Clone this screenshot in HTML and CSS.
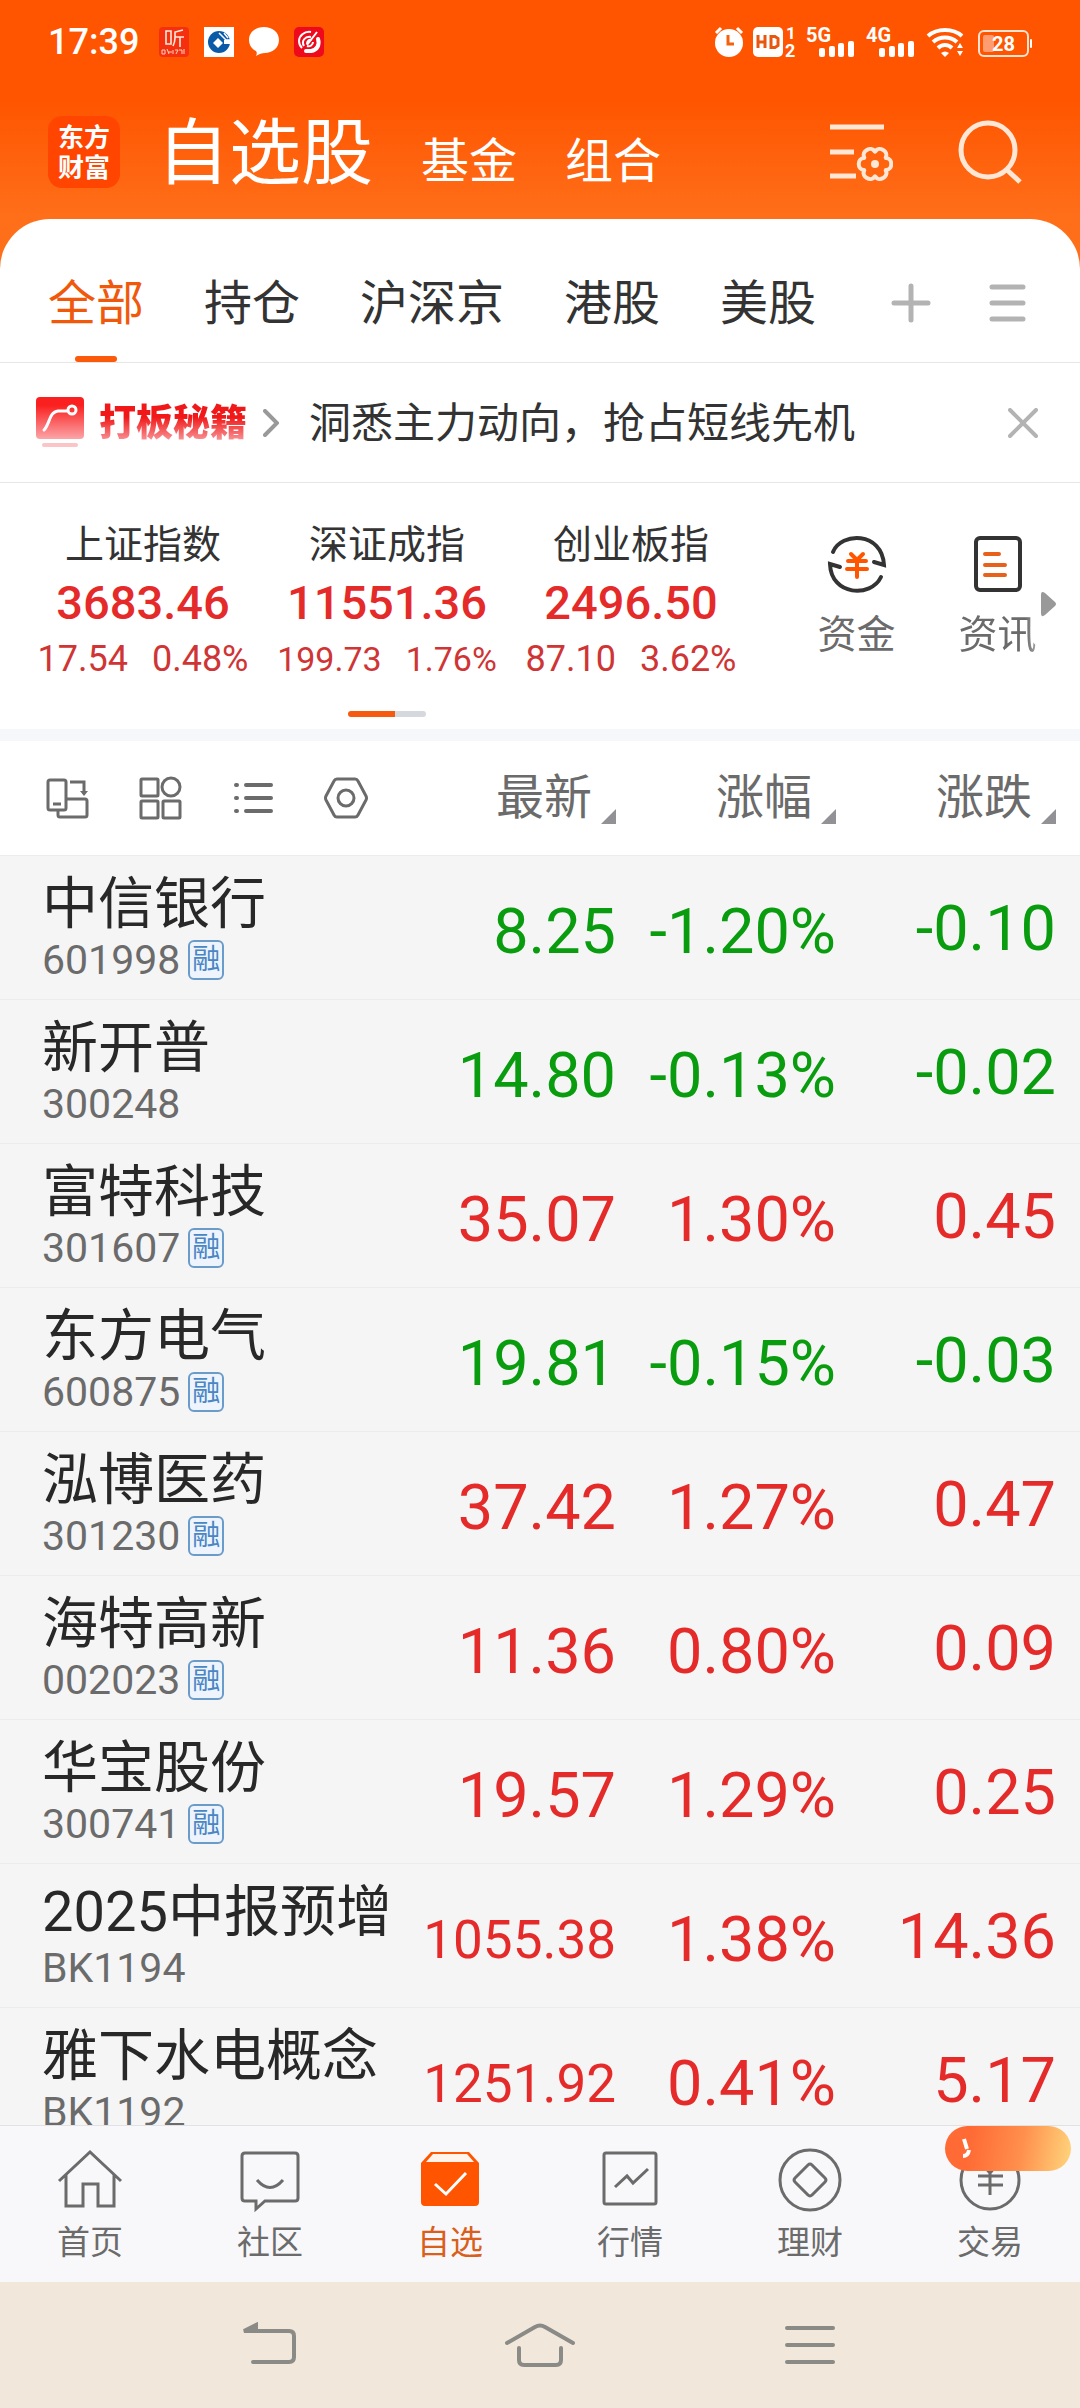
FILE: index.html
```
<!DOCTYPE html>
<html lang="zh-CN">
<head>
  <meta charset="UTF-8">
  <meta name="viewport" content="width=device-width, initial-scale=1.0">
  <title>自选股</title>
  <link rel="stylesheet" href="styles.css">
</head>
<body>
<div class="app">
  <div class="status-bar">
    <span class="clock">17:39</span>
    <svg class="notice" viewBox="0 0 30 30" width="30" height="30">
      <rect width="30" height="30" rx="4" fill="#f5300f"/>
      <path d="M7 4h5v13H7zM24 3l-8 2v6c0 4-1 6-2 8M16 10h9M21 10v10" fill="none" stroke="#ffe9df" stroke-width="1.6"/>
      <path d="M3 23h3v4H3zM8 22l2 5M9 25h4M14 23v4M16 23h3l-2 4M20 23h3v4M25 22v5" fill="none" stroke="#ffd2c2"/>
    </svg>
    <svg class="notice" viewBox="0 0 30 30" width="30" height="30">
      <rect width="30" height="30" fill="#fff"/>
      <circle cx="15" cy="15" r="11" fill="#0a5aa8"/>
      <path d="M14 11l5 5-5 5-5-5z" fill="#fff"/>
      <path d="M20 13h7v4h-7z" fill="#fff"/>
      <path d="M15 6l7 7h4M20 6l4 5" fill="none" stroke="#fff" stroke-width="1.5"/>
    </svg>
    <svg class="notice" viewBox="0 0 30 30" width="30" height="30">
      <path d="M15 0c8 0 15 5 15 13S23 26 16 26c-3 0-6 1-9 3 1-2 1-4 0-5-4-2-7-6-7-11C0 5 7 0 15 0z" fill="#fff"/>
    </svg>
    <svg class="notice" viewBox="0 0 30 30" width="30" height="30">
      <rect width="30" height="30" rx="5" fill="#ee0a1c"/>
      <path d="M17 5C10 4 5 9 5 14c0 3 1 5 3 7" fill="none" stroke="#fff" stroke-width="2"/>
      <path d="M24 12c2 6-1 11-7 12h-5" fill="none" stroke="#fff" stroke-width="4" stroke-linecap="round"/>
      <path d="M10 19c-3-5 1-10 7-9M13 17c0-3 2-5 5-4M23 5L13 18M19 15c0 3-3 5-6 4" fill="none" stroke="#fff" stroke-width="2"/>
    </svg>
    <svg class="signals" viewBox="0 -8 320 48" width="320" height="48" fill="#fff">
      <circle cx="15" cy="17" r="14"/>
      <path d="M2 7l5-5M28 7l-5-5" stroke="#fff" stroke-width="3"/>
      <path d="M14 9v9h6" fill="none" stroke="#f5600f" stroke-width="3"/>
      <rect x="39" y="1" width="30" height="30" rx="5"/>
      <path d="M44 9v13M51 9v13M44 16h7M57 10.500h4l3 2v7l-3 2h-4z" fill="none" stroke="#e8560f" stroke-width="3"/>
      <g class="signal-text">
        <text x="72" y="13" font-size="17">1</text>
        <text x="71" y="31" font-size="18">2</text>
        <text x="92" y="16" font-size="20">5G</text>
        <text x="152" y="16" font-size="20">4G</text>
      </g>
      <rect x="105" y="22" width="6" height="9" rx="2"/><rect x="115" y="20" width="6" height="11" rx="2"/><rect x="124" y="17" width="6" height="14" rx="2"/><rect x="134" y="15" width="6" height="16" rx="2"/>
      <rect x="165" y="22" width="6" height="9" rx="2"/><rect x="175" y="20" width="6" height="11" rx="2"/><rect x="184" y="17" width="6" height="14" rx="2"/><rect x="194" y="15" width="6" height="16" rx="2"/>
      <path d="M214 10c9-8 25-8 34 0M219 16c7-6 17-6 24 0M224 22c4-4 10-4 14 0" fill="none" stroke="#fff" stroke-width="4"/>
      <path d="M227 27q4-3 8 0l-4 4zM243 22l3-5 3 5zM243 25h6l-3 5z"/>
      <rect x="265" y="5" width="49" height="25" rx="5" fill="none" stroke="#ffe3d2" stroke-width="2"/>
      <rect x="269" y="9" width="11" height="17" rx="2" fill="#ff9d70"/>
      <rect x="316" y="13" width="2" height="9" rx="1"/>
      <text class="signal-text" x="278" y="25" font-size="20">28</text>
    </svg>
  </div>

  <header class="app-bar">
    <div class="logo">东方<br>财富</div>
    <nav class="sections">
      <h1>自选股</h1>
      <a href="#">基金</a>
      <a href="#">组合</a>
    </nav>
    <button class="bar-button" aria-label="设置">
      <svg viewBox="0 0 64 64" width="64" height="64" fill="none" stroke="#ffe6d5" stroke-width="5">
        <path d="M1 7h54M1 32h24M1 56h26"/>
        <g transform="translate(46 44)" stroke-width="4" stroke-linecap="round">
          <path id="lobe" d="M11 6C18 6 18-6 11-6"/>
          <use href="#lobe" transform="rotate(60)"/>
          <use href="#lobe" transform="rotate(120)"/>
          <use href="#lobe" transform="rotate(180)"/>
          <use href="#lobe" transform="rotate(240)"/>
          <use href="#lobe" transform="rotate(300)"/>
          <circle r="4" fill="#ffe6d5" stroke="none"/>
        </g>
      </svg>
    </button>
    <button class="bar-button" aria-label="搜索">
      <svg viewBox="0 0 64 64" width="64" height="64" fill="none" stroke="#ffe6d5" stroke-width="5">
        <circle cx="30" cy="30" r="27"/>
        <path d="M48 49l14 13"/>
      </svg>
    </button>
  </header>

  <main class="sheet">
    <nav class="tabs">
      <a class="tab active" href="#">全部</a>
      <a class="tab" href="#">持仓</a>
      <a class="tab" href="#">沪深京</a>
      <a class="tab" href="#">港股</a>
      <a class="tab" href="#">美股</a>
      <div class="tab-tools">
        <button aria-label="添加分组">
          <svg viewBox="0 0 40 40" width="40" height="40" stroke="#b3b3b3" stroke-width="5" stroke-linecap="round"><path d="M3 20h34M20 3v34"/></svg>
        </button>
        <button aria-label="管理分组">
          <svg viewBox="0 0 40 40" width="40" height="40" stroke="#b3b3b3" stroke-width="5" stroke-linecap="round"><path d="M5 4h31M5 20h31M5 36h31"/></svg>
        </button>
      </div>
    </nav>

    <div class="promo">
      <svg viewBox="0 0 48 52" width="48" height="52">
        <defs>
          <linearGradient id="promoFill" x1="0" y1="0" x2="0" y2="1">
            <stop offset=".2" stop-color="#fb2020"/>
            <stop offset="1" stop-color="#fba5a8"/>
          </linearGradient>
        </defs>
        <rect width="48" height="42" rx="4" fill="url(#promoFill)"/>
        <rect x="6" y="46" width="36" height="4" rx="2" fill="#fbc4c6"/>
        <path d="M8 33c6-6 5-18 14-19h9" fill="none" stroke="#fff" stroke-width="3" stroke-linecap="round"/>
        <circle cx="36" cy="13" r="4" fill="none" stroke="#fff" stroke-width="3"/>
      </svg>
      <strong>打板秘籍</strong>
      <svg class="promo-arrow" viewBox="0 0 16 28" width="16" height="28" fill="none" stroke="#999" stroke-width="4" stroke-linecap="round"><path d="M2 2l12 12L2 26"/></svg>
      <a href="#">洞悉主力动向，抢占短线先机</a>
      <button aria-label="关闭">
        <svg viewBox="0 0 30 30" width="30" height="30" stroke="#b3b3b3" stroke-width="4" stroke-linecap="round"><path d="M2 2l26 26M28 2L2 28"/></svg>
      </button>
    </div>

    <section class="overview">
      <div class="indices">
        <div class="index">
          <h2>上证指数</h2>
          <strong>3683.46</strong>
          <p><span>17.54</span><span>0.48%</span></p>
        </div>
        <div class="index">
          <h2>深证成指</h2>
          <strong>11551.36</strong>
          <p class="compact"><span>199.73</span><span>1.76%</span></p>
        </div>
        <div class="index">
          <h2>创业板指</h2>
          <strong>2496.50</strong>
          <p><span>87.10</span><span>3.62%</span></p>
        </div>
        <div class="pager"></div>
      </div>
      <div class="shortcuts">
        <a href="#">
          <svg viewBox="0 0 60 60" width="60" height="60" fill="none" stroke="#333" stroke-width="4" stroke-linecap="round">
            <path d="M6 18C14-2 55-3 57 31l-10-3"/>
            <path d="M54 43C44 64 4 62 3 30l10 3"/>
            <path d="M24 20l6 6 6-6M21 27h18M20 35h20M30 26v17" stroke="#ff5500"/>
          </svg>
          资金
        </a>
        <a class="faded" href="#">
          <svg viewBox="0 0 60 60" width="60" height="60" fill="none" stroke="#333" stroke-width="4" stroke-linecap="round">
            <rect x="8" y="4" width="44" height="52" rx="4"/>
            <path d="M17 20h14M17 31h20M17 41h20" stroke="#e8611a"/>
          </svg>
          资讯
        </a>
        <svg class="more" viewBox="0 0 15 26" width="15" height="26"><path d="M0 4q0-5 4-2l10 9q2 2 0 4L4 24q-4 3-4-2z" fill="#999"/></svg>
      </div>
    </section>

    <div class="quotes">
      <table>
        <thead>
          <tr>
            <th class="tools">
              <div>
                <button aria-label="横屏">
                  <svg viewBox="0 0 44 44" width="44" height="44" fill="none" stroke="#6b6b6b" stroke-width="3">
                    <rect x="3" y="4" width="18" height="30" rx="2"/>
                    <path d="M8 28h8M25 6h14v10M13 34v5q0 2 2 2h25q2 0 2-2V25q0-2-2-2H21"/>
                    <path d="M35 15h8l-4 5z" fill="#6b6b6b" stroke="none"/>
                  </svg>
                </button>
                <button aria-label="宫格">
                  <svg viewBox="0 0 44 44" width="44" height="44" fill="none" stroke="#6b6b6b" stroke-width="3">
                    <rect x="3" y="3" width="17" height="17" rx="1"/><circle cx="33" cy="11" r="9"/>
                    <rect x="3" y="25" width="17" height="17" rx="1"/><rect x="25" y="25" width="17" height="17" rx="1"/>
                  </svg>
                </button>
                <button aria-label="列表">
                  <svg viewBox="0 0 44 44" width="44" height="44" stroke="#6b6b6b" stroke-width="4" stroke-linecap="round">
                    <path d="M5 9h1M15 9h25M5 22h1M15 22h25M5 35h1M15 35h25"/>
                  </svg>
                </button>
                <button aria-label="设置">
                  <svg viewBox="0 0 44 44" width="44" height="44" fill="none" stroke="#6b6b6b" stroke-width="3" stroke-linejoin="round">
                    <path d="M13 3h18q2 0 3 2l8 15q1 2 0 4l-8 15q-1 2-3 2H13q-2 0-3-2L2 24q-1-2 0-4l8-15q1-2 3-2z"/>
                    <circle cx="22" cy="22" r="8"/>
                  </svg>
                </button>
              </div>
            </th>
            <th><button class="sort">最新</button></th>
            <th><button class="sort">涨幅</button></th>
            <th><button class="sort">涨跌</button></th>
          </tr>
        </thead>
        <tbody>
          <tr class="down">
            <td><div class="name">中信银行</div><div class="code">601998<i>融</i></div></td>
            <td>8.25</td><td>-1.20%</td><td>-0.10</td>
          </tr>
          <tr class="down">
            <td><div class="name">新开普</div><div class="code">300248</div></td>
            <td>14.80</td><td>-0.13%</td><td>-0.02</td>
          </tr>
          <tr class="up">
            <td><div class="name">富特科技</div><div class="code">301607<i>融</i></div></td>
            <td>35.07</td><td>1.30%</td><td>0.45</td>
          </tr>
          <tr class="down">
            <td><div class="name">东方电气</div><div class="code">600875<i>融</i></div></td>
            <td>19.81</td><td>-0.15%</td><td>-0.03</td>
          </tr>
          <tr class="up">
            <td><div class="name">泓博医药</div><div class="code">301230<i>融</i></div></td>
            <td>37.42</td><td>1.27%</td><td>0.47</td>
          </tr>
          <tr class="up">
            <td><div class="name">海特高新</div><div class="code">002023<i>融</i></div></td>
            <td>11.36</td><td>0.80%</td><td>0.09</td>
          </tr>
          <tr class="up">
            <td><div class="name">华宝股份</div><div class="code">300741<i>融</i></div></td>
            <td>19.57</td><td>1.29%</td><td>0.25</td>
          </tr>
          <tr class="up">
            <td><div class="name">2025中报预增</div><div class="code">BK1194</div></td>
            <td class="long">1055.38</td><td>1.38%</td><td>14.36</td>
          </tr>
          <tr class="up">
            <td><div class="name">雅下水电概念</div><div class="code">BK1192</div></td>
            <td class="long">1251.92</td><td>0.41%</td><td>5.17</td>
          </tr>
        </tbody>
      </table>
    </div>
  </main>

  <nav class="bottom-nav">
    <a href="#">
      <svg viewBox="0 0 66 66" width="66" height="66"><path d="M2 33L33 4l31 29M9 27v31h17V36h15v22h16V27"/></svg>
      首页
    </a>
    <a href="#">
      <svg viewBox="0 0 66 66" width="66" height="66"><path d="M8 5h50q3 0 3 3v42q0 3-3 3H28l-9 8v-8H8q-3 0-3-3V8q0-3 3-3zM20 32q13 15 26 0"/></svg>
      社区
    </a>
    <a class="active" href="#">
      <svg viewBox="0 0 66 66" width="66" height="66">
        <path d="M4 15L14 4h38l10 11v39q0 4-4 4H8q-4 0-4-4z" fill="#ff5500" stroke="none"/>
        <path d="M9 14l7-8h34l7 8z" fill="#fff4ec" stroke="none"/>
        <path d="M18 36l11 10 20-21" stroke="#fff"/>
      </svg>
      自选
    </a>
    <a href="#">
      <svg viewBox="0 0 66 66" width="66" height="66"><rect x="7" y="5" width="52" height="51" rx="2"/><path d="M18 39l12-11 6 7 15-14"/></svg>
      行情
    </a>
    <a href="#">
      <svg viewBox="0 0 66 66" width="66" height="66"><circle cx="33" cy="32" r="30"/><path d="M35 17l13 13q2 2 0 4L35 47q-2 2-4 0L18 34q-2-2 0-4l13-13q2-2 4 0z"/></svg>
      理财
    </a>
    <a href="#">
      <svg viewBox="0 0 66 66" width="66" height="66"><circle cx="33" cy="32" r="29"/><path d="M25 16l8 9 8-9M21 28h25M21 37h25M33 25v22"/></svg>
      交易
      <span class="bubble"><svg viewBox="0 0 10 22" width="10" height="22"><path d="M3 2l3 10M8 13q-1 6-6 6" fill="none" stroke="#fff" stroke-width="4"/></svg></span>
    </a>
  </nav>

  <div class="system-nav">
    <button aria-label="返回">
      <svg viewBox="0 0 72 46" width="72" height="46"><path d="M12 9h43q5 0 5 5v21q0 5-5 5H19"/><path d="M10 9L22 3v6z" fill="#8a8a86"/></svg>
    </button>
    <button aria-label="主屏幕">
      <svg viewBox="0 0 72 46" width="72" height="46"><path d="M3 21L31 5q5-3 10 0l28 16M15 26v12q0 5 5 5h32q5 0 5-5V26"/></svg>
    </button>
    <button aria-label="最近任务">
      <svg viewBox="0 0 72 46" width="72" height="46"><path d="M13 6h46M13 23h46M13 40h46"/></svg>
    </button>
  </div>
</div>
</body>
</html>
```
FILE: styles.css
```
* {
  box-sizing: border-box;
}

body {
  margin: 0;
  font-family: Roboto, "Noto Sans CJK SC", sans-serif;
  color: #333;
}

a {
  color: inherit;
  text-decoration: none;
}

button {
  padding: 0;
  border: none;
  background: none;
  font: inherit;
  color: inherit;
  cursor: pointer;
}

svg {
  display: block;
  flex: none;
}

h1, h2, p {
  margin: 0;
  font-weight: normal;
}

.app {
  height: 100vh;
  display: flex;
  flex-direction: column;
  overflow: hidden;
  background: linear-gradient(#ff5500 100px, #ff6f1a 219px);
}

/* status bar */
.status-bar {
  height: 84px;
  padding: 0 46px 0 48px;
  display: flex;
  align-items: center;
  color: #fff;
}

.clock {
  margin-right: 5px;
  font-size: 36px;
  font-weight: 500;
}

.notice {
  margin-left: 15px;
}

.signals {
  margin-left: auto;
}

.signal-text {
  font-weight: 700;
}

/* app bar */
.app-bar {
  height: 135px;
  padding: 0 58px 0 48px;
  display: flex;
  align-items: center;
  color: #fff;
}

.logo {
  width: 72px;
  height: 72px;
  padding-top: 5px;
  border-radius: 14px;
  background: #ff4500;
  font-family: "Noto Sans CJK SC", sans-serif;
  font-size: 26px;
  font-weight: 700;
  line-height: 30px;
  text-align: center;
}

.sections {
  flex: 1;
  margin-left: 37px;
  padding-top: 12px;
  display: flex;
  align-items: baseline;
  gap: 48px;
  font-size: 48px;
  line-height: 72px;
}

.sections h1 {
  font-size: 72px;
}

.bar-button {
  margin-left: 65px;
}

/* white sheet */
.sheet {
  flex: 1;
  min-height: 0;
  display: flex;
  flex-direction: column;
  border-radius: 50px 50px 0 0;
  background: #fff;
  overflow: hidden;
}

.tabs {
  height: 144px;
  flex: none;
  padding: 0 53px 0 48px;
  display: flex;
  gap: 60px;
  border-bottom: 1px solid #e6e6e6;
  font-size: 48px;
  line-height: 170px;
}

.tab {
  position: relative;
  height: 143px;
}

.tab.active {
  color: #f0590c;
}

.tab.active::after {
  content: "";
  position: absolute;
  left: 50%;
  bottom: 0;
  width: 42px;
  height: 6px;
  margin-left: -21px;
  border-radius: 3px;
  background: #fa5a0a;
}

.tab-tools {
  margin-left: auto;
  padding-top: 24px;
  display: flex;
  align-items: center;
  gap: 56px;
}

.promo {
  height: 120px;
  flex: none;
  padding: 0 42px 0 36px;
  display: flex;
  align-items: center;
  border-bottom: 1px solid #e6e6e6;
  font-size: 42px;
}

.promo strong {
  margin-left: 15px;
  padding-bottom: 6px;
  font-size: 37px;
  font-weight: 900;
  background: linear-gradient(#f01818 40%, #fba5a8 85%);
  -webkit-background-clip: text;
  background-clip: text;
  color: transparent;
}

.promo-arrow {
  margin: 0 30px 0 16px;
}

.promo a {
  flex: 1;
  padding-bottom: 6px;
}

/* market overview */
.overview {
  height: 258px;
  flex: none;
  display: flex;
  border-bottom: 12px solid #f5f7fa;
}

.indices {
  flex: 1;
  padding: 36px 0 0 21px;
  display: grid;
  grid-template-columns: repeat(3, 244px);
  grid-template-rows: 160px 6px;
  row-gap: 32px;
  text-align: center;
}

.index h2 {
  font-size: 39px;
  line-height: 52px;
}

.index strong {
  display: block;
  color: #e52a2a;
  font-size: 47px;
  font-weight: 500;
  line-height: 64px;
}

.index p {
  display: flex;
  justify-content: center;
  gap: 24px;
  color: #cf3535;
  font-size: 36px;
  line-height: 48px;
}

.index .compact {
  font-size: 34px;
}

.pager {
  grid-column: 1 / 4;
  justify-self: center;
  width: 78px;
  height: 6px;
  border-radius: 3px;
  background: linear-gradient(90deg, #f55a10 60%, #d5d8dc 60%);
}

.shortcuts {
  position: relative;
  width: 294px;
  padding: 51px 12px 0 0;
  display: grid;
  grid-template-columns: 1fr 1fr;
  align-items: start;
  color: #6b6b6b;
  font-size: 39px;
  line-height: 52px;
}

.shortcuts a {
  display: flex;
  flex-direction: column;
  align-items: center;
  gap: 15px;
}

.faded {
  -webkit-mask-image: linear-gradient(90deg, #000 70%, transparent 90%);
  mask-image: linear-gradient(90deg, #000 70%, transparent 90%);
}

.more {
  position: absolute;
  right: 24px;
  top: 108px;
}

/* quotes */
.quotes {
  flex: 1;
  min-height: 0;
  overflow: hidden;
  background: #f5f5f5;
}

table {
  width: 100%;
  table-layout: fixed;
  border-collapse: separate;
  border-spacing: 0;
}

th {
  width: 220px;
  height: 115px;
  padding: 0;
  border-bottom: 1px solid #ececec;
  background: #fff;
  color: #6b6b6b;
  font-weight: normal;
  text-align: right;
}

th.tools {
  width: auto;
}

th:last-child {
  width: 244px;
  padding-right: 24px;
}

.tools div {
  padding-left: 45px;
  display: flex;
  gap: 49px;
}

.sort {
  position: relative;
  padding-right: 24px;
  font-size: 48px;
  line-height: 60px;
}

.sort::after {
  content: "";
  position: absolute;
  right: 0;
  bottom: 4px;
  border-left: 15px solid transparent;
  border-bottom: 15px solid #929296;
}

td {
  height: 144px;
  padding: 8px 0 0;
  border-bottom: 1px solid #ececec;
  font-size: 63px;
  line-height: 72px;
  text-align: right;
  white-space: nowrap;
}

td:first-child {
  padding: 0 0 0 42px;
  text-align: left;
}

td:last-child {
  padding: 2px 24px 0 0;
}

td.long {
  font-size: 53px;
}

.up {
  color: #e52a2a;
}

.down {
  color: #0a9c0f;
}

.name {
  color: #282828;
  font-size: 56px;
  line-height: 64px;
}

.code {
  display: flex;
  align-items: center;
  gap: 8px;
  color: #6b6b6b;
  font-size: 41px;
  line-height: 48px;
}

.code i {
  width: 36px;
  height: 40px;
  border: 2px solid #6a9bcb;
  border-radius: 6px;
  background: #eef4fb;
  color: #4a86c4;
  font-size: 28px;
  font-style: normal;
  line-height: 36px;
  text-align: center;
}

/* bottom navigation */
.bottom-nav {
  height: 157px;
  flex: none;
  padding-top: 22px;
  display: grid;
  grid-template-columns: repeat(6, 1fr);
  border-top: 1px solid #e2e2e4;
  background: #f8f8fa;
  color: #6b6b6b;
  font-size: 33px;
  line-height: 44px;
}

.bottom-nav a {
  position: relative;
  display: flex;
  flex-direction: column;
  align-items: center;
  gap: 7px;
}

.bottom-nav svg {
  fill: none;
  stroke: #6b6b6b;
  stroke-width: 3;
}

.bottom-nav .active {
  color: #d9601c;
}

.bubble {
  position: absolute;
  top: -22px;
  right: 9px;
  width: 126px;
  height: 45px;
  padding: 11px 0 0 16px;
  border-radius: 23px;
  background: linear-gradient(100deg, #ff6a35 20%, #ff8f4c 60%, #ffd67d);
}

/* system navigation */
.system-nav {
  height: 126px;
  flex: none;
  padding: 0 12.5%;
  display: flex;
  align-items: center;
  justify-content: space-around;
  background: #f1e7db;
}

.system-nav svg {
  fill: none;
  stroke: #8a8a86;
  stroke-width: 4;
  stroke-linecap: round;
}
```
